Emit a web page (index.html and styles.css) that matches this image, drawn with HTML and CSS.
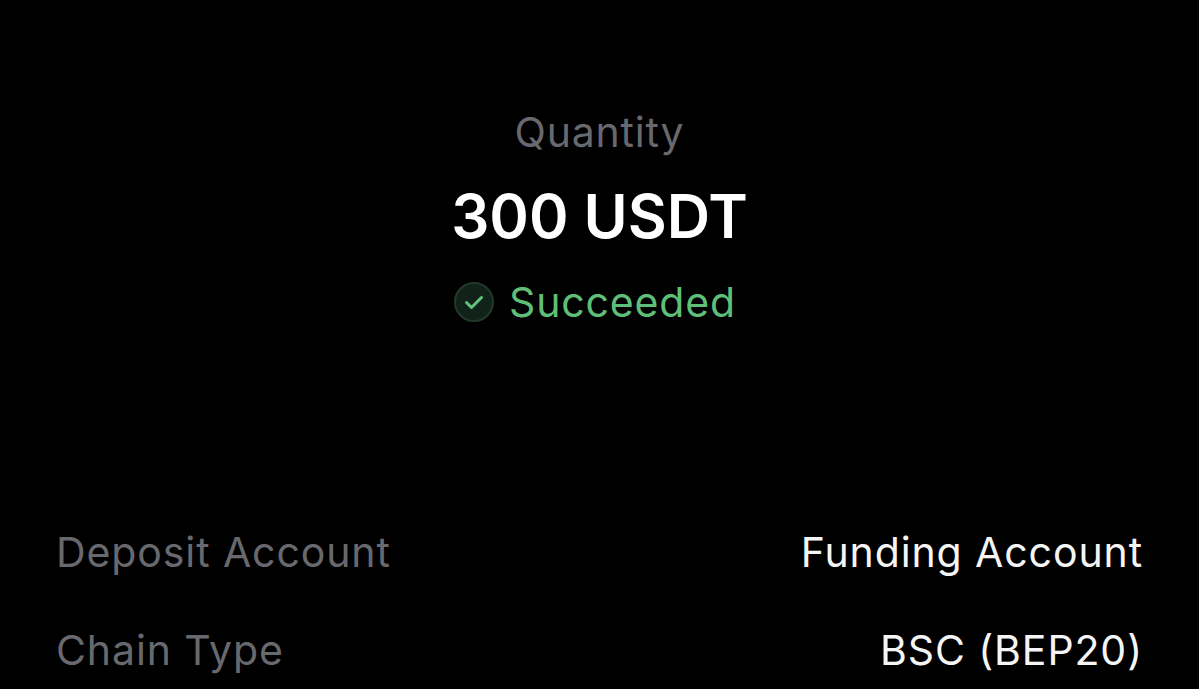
FILE: index.html
```html
<!DOCTYPE html>
<html lang="en">
<head>
    <meta charset="UTF-8">
    <title>Deposit Details</title>
    <link rel="stylesheet" href="styles.css">
</head>
<body>
    <div class="container">
        <div class="summary">
            <div class="label">Quantity</div>
            <div class="amount">300 USDT</div>
            <div class="status">
                <svg class="status-icon" viewBox="0 0 40 40" width="40" height="40">
                    <circle cx="20" cy="20" r="19" fill="#10221a" stroke="#203a29" stroke-width="2"/>
                    <path d="M12.5 20.5l5 5 10-10" fill="none" stroke="#62c27c" stroke-width="3" stroke-linecap="round" stroke-linejoin="round"/>
                </svg>
                <span>Succeeded</span>
            </div>
        </div>
        <div class="details">
            <div class="row"><span class="key">Deposit Account</span><span class="val">Funding Account</span></div>
            <div class="row"><span class="key">Chain Type</span><span class="val">BSC (BEP20)</span></div>
        </div>
    </div>
</body>
</html>
```

FILE: styles.css
```css
html, body {
    margin: 0;
    padding: 0;
    height: 100%;
    overflow: hidden;
    background: #000;
}
body {
    font-family: Inter, "Liberation Sans", sans-serif;
}
.container {
    height: 689px;
    padding: 0 56px;
    box-sizing: border-box;
}
.summary {
    display: flex;
    flex-direction: column;
    align-items: center;
    padding-top: 106px;
}
.label {
    font-size: 41px;
    letter-spacing: 0.8px;
    line-height: 52px;
    color: #68696e;
}
.amount {
    font-size: 60px;
    font-weight: 600;
    line-height: 72px;
    margin-top: 22px;
    color: #fff;
}
.status {
    display: flex;
    align-items: center;
    gap: 15px;
    margin-top: 24px;
    padding-right: 9px;
    font-size: 41px;
    letter-spacing: 0.85px;
    line-height: 52px;
    color: #5fbf78;
}
.details {
    margin-top: 198px;
}
.row {
    display: flex;
    justify-content: space-between;
    font-size: 41px;
    letter-spacing: 0.9px;
    line-height: 52px;
    margin-bottom: 46px;
}
.key {
    color: #68696e;
}
.val {
    color: #f5f5f5;
}
```
